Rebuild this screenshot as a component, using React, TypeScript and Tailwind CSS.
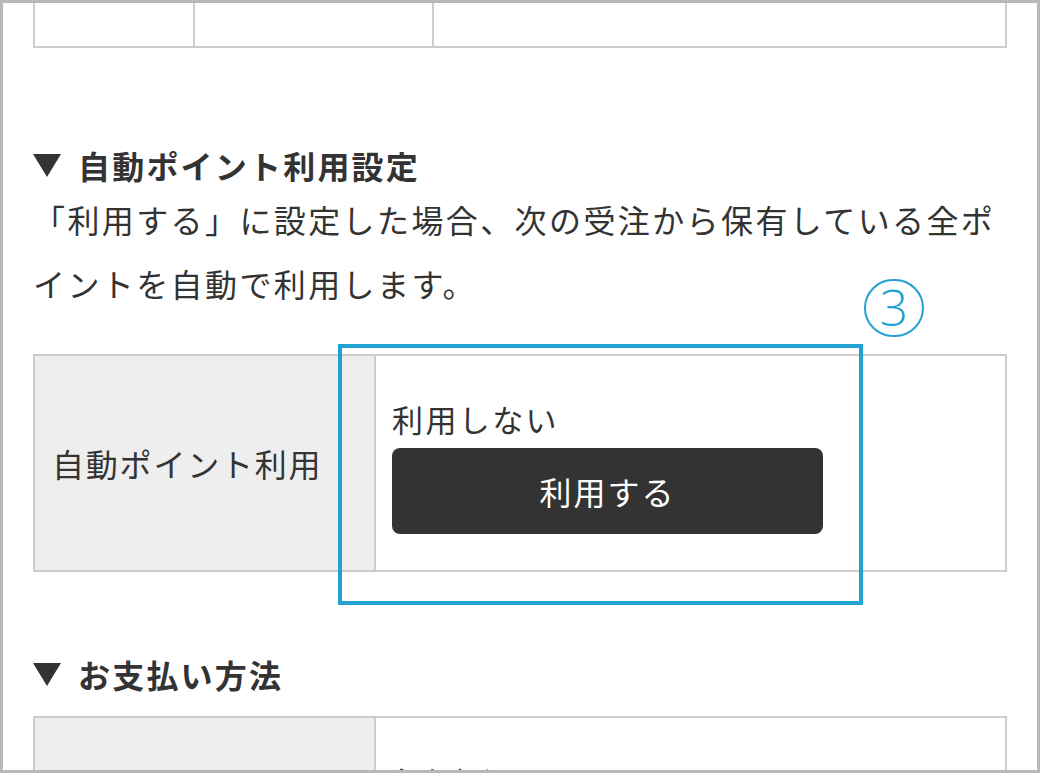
import React from "react";

function Tri() {
  return (
    <svg width="28" height="23" viewBox="0 0 28 23" className="shrink-0">
      <polygon points="0,0 28,0 14,23" fill="#333333" />
    </svg>
  );
}

export default function App() {
  return (
    <div className="relative w-[1040px] h-[773px] overflow-hidden border-[3px] border-[#b8b8b8] bg-white text-[#333333] font-['Noto_Sans_CJK_JP','Noto_Sans',sans-serif]">
      <div className="px-[30px]">
        {/* top table (cut off) */}
        <div className="flex h-[45px] border-2 border-t-0 border-[#cccccc]">
          <div className="w-[160px] border-r-2 border-[#cccccc]" />
          <div className="w-[239px] border-r-2 border-[#cccccc]" />
          <div className="flex-1" />
        </div>

        {/* heading 1 */}
        <div className="mt-[95px] flex h-[44px] items-center gap-[17px] text-[32px] font-bold leading-[44px] tracking-[2.2px]">
          <Tri />
          <span>自動ポイント利用設定</span>
        </div>
        <p className="text-[32px] leading-[64px] tracking-[2.4px] whitespace-nowrap">
          「利用する」に設定した場合、次の受注から保有している全ポ
          <br />
          イントを自動で利用します。
        </p>

        {/* table 2 */}
        <div className="mt-[39px] flex border-2 border-[#cccccc]">
          <div className="flex w-[341px] items-center border-r-2 border-[#cccccc] bg-[#eeeeee] pl-[17px] text-[32px] tracking-[1.8px]">
            自動ポイント利用
          </div>
          <div className="flex-1 pl-[16px] pt-[43px] pb-[36px]">
            <div className="h-[40px] text-[31px] leading-[40px] tracking-[2.4px]">利用しない</div>
            <button className="mt-[9px] flex h-[86px] w-[431px] items-center justify-center rounded-[8px] bg-[#333333] text-[32px] tracking-[2px] text-white">
              利用する
            </button>
          </div>
        </div>

        {/* heading 2 */}
        <div className="mt-[80px] flex h-[44px] items-center gap-[17px] text-[32px] font-bold leading-[44px] tracking-[2.2px]">
          <Tri />
          <span>お支払い方法</span>
        </div>

        {/* table 3 */}
        <div className="mt-[20px] flex border-2 border-[#cccccc]">
          <div className="w-[341px] border-r-2 border-[#cccccc] bg-[#eeeeee]" />
          <div className="flex-1 pl-[18px] pt-[43px] pb-[36px]">
            <div className="h-[40px] text-[29px] leading-[40px] tracking-[1px]">銀行振込</div>
            <div className="h-[100px]" />
          </div>
        </div>
      </div>

      {/* annotation overlay */}
      <div className="absolute left-[335px] top-[341px] h-[261px] w-[525px] border-4 border-[#22a2d0]" />
      <div className="absolute left-[861px] top-[276px] flex h-[58px] w-[60px] items-center justify-center rounded-full border-2 border-[#22a2d0] pb-[2px] text-[50px] font-light leading-none text-[#22a2d0] font-['Open_Sans','Noto_Sans',sans-serif]">
        3
      </div>
    </div>
  );
}
